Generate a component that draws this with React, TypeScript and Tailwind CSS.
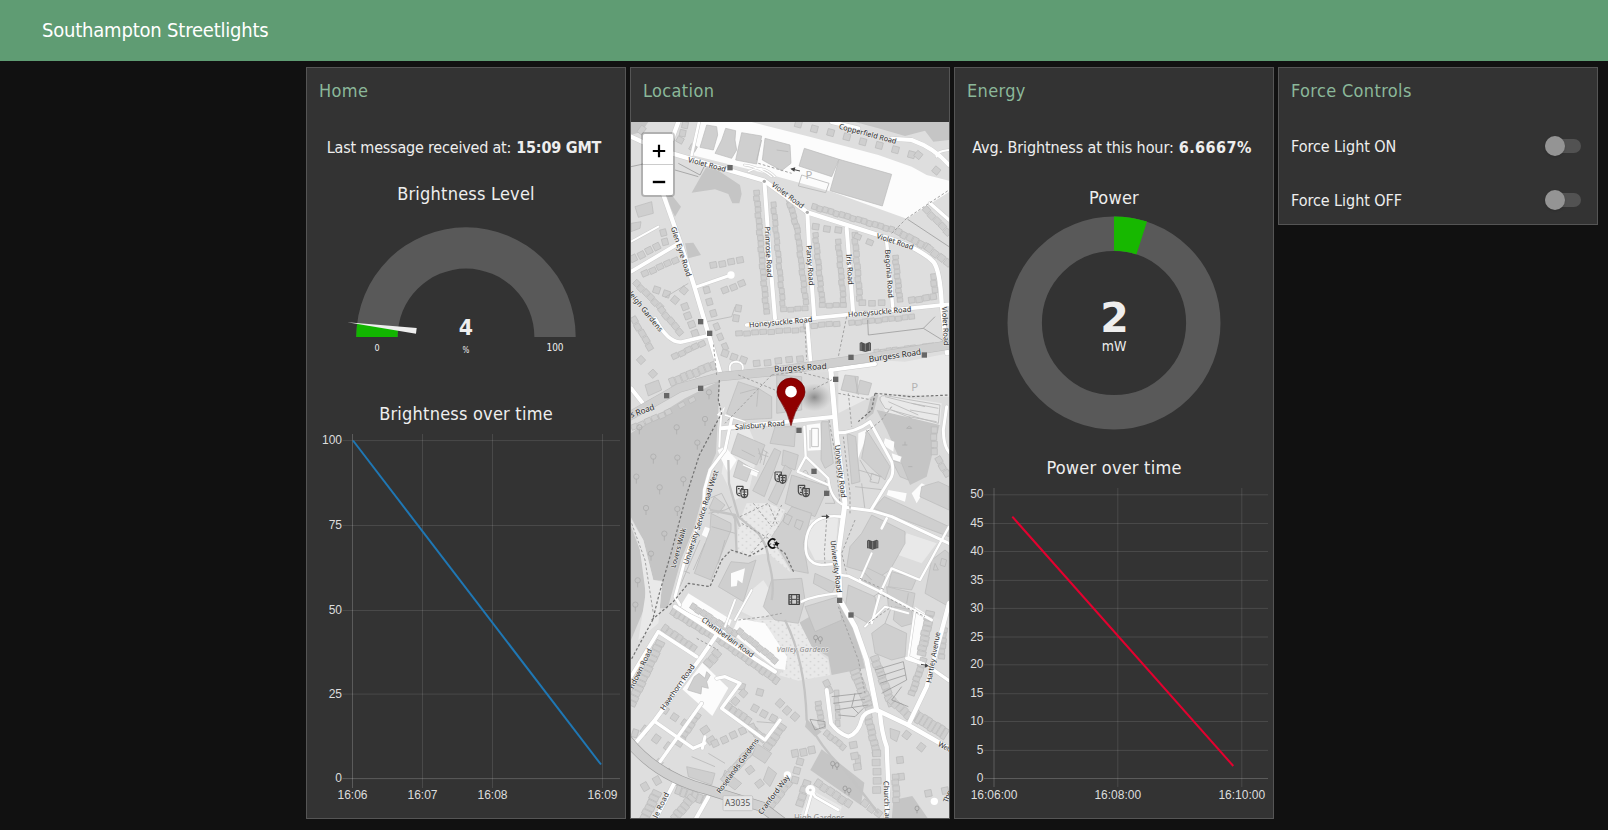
import type { ReactNode } from 'react';

const UI = 'font-["DejaVu_Sans_Condensed",Tahoma,"DejaVu_Sans",sans-serif]';

function Card({ title, className = '', children }: { title: string; className?: string; children: ReactNode }) {
  return (
    <section className={`flex w-80 flex-col border border-[#555] bg-[#333] ${className}`}>
      <h2 className="h-[54px] shrink-0 pt-[7px] pl-3 text-[18px] leading-[31px] tracking-[0.35px] text-[#8bb89a]">{title}</h2>
      {children}
    </section>
  );
}

function Message({ label, value, className }: { label: string; value: string; className: string }) {
  return (
    <p className={`flex h-[50px] items-center justify-center gap-[5px] pt-[2px] pr-1 text-[16px] whitespace-nowrap ${className}`}>
      <span>{label}</span>
      <b>{value}</b>
    </p>
  );
}

function ChartTitle({ children }: { children: string }) {
  return <h3 className="flex h-9 items-center justify-center pb-[2px] text-[18px] tracking-[0.22px]">{children}</h3>;
}

function Toggle({ label }: { label: string }) {
  return (
    <div className="flex h-[54px] shrink-0 items-center justify-between pr-4 pb-[6px] pl-3">
      <span className="pt-[2px] text-[16px] tracking-[-0.05px]">{label}</span>
      <button role="switch" aria-checked="false" aria-label={label} className="flex h-5 w-9 items-center">
        <span className="flex h-[14px] w-9 items-center rounded-full bg-[#525252]">
          <span className="size-5 shrink-0 rounded-full bg-[#949494] shadow" />
        </span>
      </button>
    </div>
  );
}

type Tick = [number, string];

function LineChart({
  box, xs, ys, left, right, top, bottom, labelY, color, line,
}: {
  box: string; xs: Tick[]; ys: Tick[]; left: number; right: number; top: number; bottom: number;
  labelY: number; color: string; line: [number, number, number, number];
}) {
  return (
    <svg viewBox={box} className="block w-full" fontSize="12" fill="#ddd">
      <g className='font-["Liberation_Sans",Arial,sans-serif]'>
        {ys.map(([y, t], i) => (
          <g key={t}>
            <line x1={left - 10} x2={right} y1={y} y2={y} stroke="#fff" strokeOpacity={i === ys.length - 1 ? 0.2 : 0.11} />
            <text x={left - 10.5} y={y + 3.6} textAnchor="end">{t}</text>
          </g>
        ))}
        {xs.map(([x, t], i) => (
          <g key={t}>
            <line x1={x} x2={x} y1={top} y2={bottom} stroke="#fff" strokeOpacity={i === 0 ? 0.2 : 0.11} />
            <text x={x} y={labelY} textAnchor="middle">{t}</text>
          </g>
        ))}
      </g>
      <line x1={line[0]} y1={line[1]} x2={line[2]} y2={line[3]} stroke={color} strokeWidth="2" />
    </svg>
  );
}

function BrightnessGauge() {
  return (
    <svg viewBox="307 216 318 180" className="block w-full" fill="#eee" textAnchor="middle">
      <path d="M356.3 337A109.7 109.7 0 0 1 575.7 337H534.4A68.4 68.4 0 0 0 397.6 337Z" fill="#595959" />
      <path d="M356.3 337A109.7 109.7 0 0 1 357.2 323.3L398.1 328.4A68.4 68.4 0 0 0 397.6 337Z" fill="#12b500" />
      <path d="M347.3 322.3L416.7 328L416 333.7Z" />
      <text x="466" y="335" fontSize="20.5" fontWeight="700" className='font-["DejaVu_Sans",sans-serif]'>4</text>
      <text x="466" y="353" fontSize="8">%</text>
      <text x="377" y="351" fontSize="9">0</text>
      <text x="555" y="351" fontSize="10">100</text>
    </svg>
  );
}

function PowerDonut() {
  return (
    <svg viewBox="955 216 318 234" className="block w-full" fill="#eee" textAnchor="middle">
      <circle cx="1114" cy="323" r="89.3" fill="none" stroke="#595959" strokeWidth="34.4" />
      <path d="M1114 216.4A106.6 106.6 0 0 1 1147 221.6L1136.4 254.4A72.2 72.2 0 0 0 1114 250.8Z" fill="#17b800" />
      <text x="1114.5" y="331.7" fontSize="41" fontWeight="700" className='font-["DejaVu_Sans",sans-serif]'>2</text>
      <text x="1114" y="351" fontSize="14">mW</text>
    </svg>
  );
}

/* ---- Map data, in thirds of a pixel ---- */

const woods = [
  '18,186 70,186 50,215 18,225',
  '250,312 345,375 350,402 343,430 322,430 310,402 270,388 200,398 230,345',
  '120,410 140,405 168,440 150,470',
  '690,186 972,186 972,240 925,245 900,212 840,228 760,205',
  '180,550 205,548 228,585 190,595',
  '18,1120 60,1090 180,1015 285,962 278,1080 273,1180 243,1250 233,1310 208,1400 168,1500 128,1645 104,1645 112,1562 85,1560 55,1440 18,1372',
  '18,1400 45,1470 60,1560 60,1640 18,1740',
  '755,1050 945,1090 905,1250 855,1275 825,1200 785,1110',
  '740,1000 760,1005 745,1060 720,1080',
  '590,2068 718,2168 708,2236 556,2130',
  '545,1978 590,2015 570,2030 540,2000',
  '805,2220 862,2208 912,2280 800,2280',
  '520,1690 640,1620 690,1700 720,1825 620,1845 610,1790 560,1760',
];

const pale = [
  '310,1115 370,1100 400,1170 370,1300 330,1320 290,1240',
  '365,1330 430,1330 480,1350 440,1440 500,1540 430,1480 370,1490 335,1470 340,1390',
  '555,1380 640,1365 630,1500 570,1500 545,1450',
  '845,1420 935,1450 890,1510 805,1480',
  '385,1680 520,1680 560,1760 610,1800 615,1845 520,1862 460,1845 487,1820 470,1760',
  '640,920 750,900 840,905 972,880 972,1010 860,1005 760,1000 640,1060',
  '760,1000 950,1030 945,1095 780,1055',
  '18,1380 55,1440 85,1560 112,1565 100,1690 40,1740 62,1600 45,1470',
  '560,2190 650,2240 640,2280 520,2280',
  '380,1590 415,1560 440,1600 440,1660 400,1680 340,1650',
];

const white = [
  '225,186 380,186 560,232 760,285 860,320 905,345 972,362 972,396 845,476 620,395 440,345 200,285',
  '340,1675 420,1690 486,1790 480,1830 450,1825 320,1720',
  '232,1808 310,1884 262,1968 172,1888',
  '860,1300 890,1270 930,1290 920,1310 890,1305 875,1330',
  '190,1600 320,1680 300,1730 165,1640',
  '870,1640 900,1660 890,1800 845,1790',
  '278,1170 300,1160 335,1200 310,1240 290,1200',
  '545,1095 585,1090 590,1170 548,1172',
  '318,1540 360,1525 352,1570 318,1580',
  '275,1065 300,1040 290,1070',
  '240,1400 270,1410 260,1440 230,1425',
  '780,1135 808,1145 805,1175 775,1155',
  '800,1180 830,1190 825,1205 805,1200',
  '790,1290 845,1300 840,1325 785,1305',
  '700,1120 735,1105 705,1180 698,1200',
  '360,1215 400,1235 395,1250 358,1235',
];

const buildings = [
  '245,195 275,200 278,225 265,270 225,262',
  '302,205 332,212 330,240 335,270 320,295 270,280 290,240',
  '350,218 410,228 395,312 332,300',
  '420,235 495,255 498,310 470,332 412,300',
  '538,265 642,298 620,350 522,318',
  '642,298 800,343 772,438 615,392',
  '30,440 80,425 85,460 40,472',
  '18,490 48,485 45,505 18,515',
  '60,975 100,960 110,990 70,1008',
  '340,965 400,985 440,1010 440,1075 345,1080 305,1060',
  '455,945 530,950 530,1050 455,1060',
  '660,945 700,950 695,1000 648,990',
  '705,960 740,970 730,1005 695,1000',
  '338,1120 420,1155 395,1215 318,1180',
  '450,1100 512,1100 508,1160 435,1150',
  '448,1165 468,1175 418,1310 383,1292',
  '475,1170 520,1185 510,1230 470,1215',
  '480,1215 500,1230 455,1335 430,1320',
  '500,1245 610,1280 570,1370 480,1330',
  '340,1200 380,1225 365,1265 325,1250',
  '268,1310 300,1335 280,1360 252,1345',
  '500,1340 560,1360 535,1450 550,1540 500,1530 440,1430',
  '590,1085 610,1085 625,1210 600,1225 588,1200',
  '666,1120 692,1130 705,1265 680,1272',
  '725,1110 795,1220 780,1260 745,1230 710,1195',
  '800,1200 830,1210 850,1260 825,1250',
  '778,1310 972,1400 972,1430 745,1345',
  '890,1280 940,1265 972,1280 972,1350 885,1310',
  '740,1365 840,1415 840,1450 795,1530 765,1550 665,1520 675,1460 710,1420',
  '258,1360 318,1390 318,1410 258,1560 208,1540 255,1410',
  '318,1505 370,1510 393,1500 355,1625 280,1580',
  '440,1560 530,1555 540,1620 520,1690 450,1680 415,1640',
  '570,1540 635,1570 620,1600 565,1570',
  '670,1575 750,1610 755,1650 730,1690 660,1650',
  '540,1640 640,1610 650,1680 570,1715',
  '800,1535 875,1555 860,1590 790,1580',
  '720,1520 780,1550 770,1590 710,1560',
  '785,1580 870,1600 860,1660 790,1640',
  '920,1500 960,1470 972,1480 972,1640 900,1600',
  '810,1640 860,1650 865,1690 830,1700 805,1680',
  '740,1720 780,1690 845,1720 840,1790 800,1800 750,1780',
  '208,1850 222,1840 240,1855 245,1835 256,1845 245,1865 250,1885 230,1880 228,1902 188,1890',
  '395,2050 440,2080 420,2110 382,2085',
  '185,2120 270,2140 260,2175 190,2150',
  '300,2130 350,2170 330,2190 290,2160',
  '430,2120 455,2140 435,2180 415,2160',
  '795,2005 825,2015 815,2045 797,2035',
  '690,2085 705,2085 708,2120 692,2122',
];

/* x1, y1, x2, y2, count, depth: terraces running between two points */
type Terrace = [number, number, number, number, number, number];
const terraces: Terrace[] = [
  [520, 192, 860, 282, 8, 20], [880, 285, 935, 330, 2, 20],
  [395, 398, 425, 755, 22, 17], [446, 434, 474, 730, 17, 15], [492, 418, 515, 500, 6, 17], [518, 512, 543, 726, 13, 16],
  [568, 440, 800, 508, 15, 17], [572, 525, 592, 720, 13, 16], [640, 545, 656, 720, 11, 16], [690, 525, 705, 715, 11, 17],
  [812, 592, 825, 720, 10, 17], [820, 515, 905, 560, 6, 20], [912, 565, 968, 608, 4, 20], [905, 450, 968, 515, 5, 18],
  [926, 650, 930, 690, 3, 17], [476, 748, 540, 745, 4, 14], [592, 735, 655, 735, 4, 14],
  [572, 500, 640, 510, 3, 18], [698, 530, 735, 545, 2, 16], [712, 728, 770, 728, 3, 17], [860, 720, 925, 710, 4, 18],
  [342, 820, 535, 808, 9, 15], [545, 798, 635, 790, 5, 15], [680, 788, 860, 770, 10, 15],
  [395, 910, 525, 895, 5, 18], [755, 875, 955, 852, 12, 14], [142, 965, 265, 915, 8, 24], [150, 888, 230, 850, 5, 16],
  [35, 670, 105, 740, 6, 18], [110, 750, 165, 815, 5, 18], [28, 780, 75, 860, 5, 18], [25, 595, 95, 560, 4, 20], [115, 518, 122, 545, 2, 18],
  [60, 640, 150, 600, 5, 17], [95, 690, 125, 700, 2, 20], [150, 720, 175, 690, 2, 20], [180, 740, 210, 820, 4, 20],
  [245, 690, 265, 760, 3, 18], [275, 800, 300, 860, 3, 16], [265, 615, 345, 600, 4, 18], [300, 690, 350, 670, 3, 18],
  [340, 745, 335, 775, 2, 18], [300, 880, 355, 900, 3, 20], [48, 900, 85, 940, 2, 20], [28, 1100, 130, 1056, 6, 16],
  [170, 1035, 200, 1018, 2, 14], [165, 240, 205, 262, 2, 18], [180, 195, 175, 220, 2, 18], [50, 210, 70, 225, 1, 24],
  [145, 1655, 260, 1725, 10, 22], [120, 1705, 205, 1765, 7, 22], [280, 1735, 455, 1860, 14, 22],
  [205, 1640, 330, 1720, 9, 18], [345, 1715, 450, 1800, 8, 18], [105, 1750, 20, 1930, 13, 26],
  [350, 1880, 405, 1895, 2, 20], [355, 1900, 310, 1950, 3, 20], [310, 1940, 370, 1980, 5, 22], [250, 1810, 275, 1780, 3, 26],
  [390, 1945, 445, 1975, 3, 20], [465, 1930, 510, 1970, 3, 22], [470, 2000, 430, 2060, 5, 26], [385, 2010, 415, 2035, 3, 24],
  [215, 1965, 160, 2050, 7, 24], [120, 1950, 180, 1990, 3, 20], [240, 2010, 260, 2040, 2, 24], [60, 2010, 130, 2060, 3, 24],
  [30, 2020, 60, 2030, 1, 24], [100, 2110, 165, 2170, 3, 24], [270, 2050, 380, 2000, 5, 20], [370, 2080, 300, 2160, 7, 24],
  [60, 2180, 130, 2140, 3, 24], [95, 2200, 60, 2274, 6, 28], [160, 2190, 240, 2220, 6, 26], [200, 2215, 150, 2274, 6, 26],
  [375, 2130, 405, 2170, 2, 22], [490, 2170, 430, 2250, 6, 22], [510, 2080, 560, 2070, 3, 22], [525, 2105, 510, 2160, 3, 20],
  [580, 1930, 592, 2000, 6, 18], [605, 1870, 615, 1890, 2, 18], [635, 1900, 640, 1990, 5, 14], [605, 2020, 655, 2060, 5, 18],
  [690, 1835, 735, 1945, 9, 28], [750, 1795, 800, 1930, 9, 24], [800, 1920, 850, 1965, 5, 24], [870, 1965, 960, 2020, 8, 34],
  [730, 1970, 755, 2080, 8, 22], [755, 2080, 757, 2190, 5, 24], [685, 2055, 697, 2120, 3, 22], [845, 2025, 890, 2060, 2, 22],
  [915, 1660, 890, 1780, 9, 26], [958, 1710, 950, 1790, 6, 18], [895, 1800, 862, 1900, 8, 20], [825, 2100, 830, 2150, 2, 20],
  [812, 2150, 815, 2220, 5, 20], [910, 2200, 960, 2190, 2, 20], [545, 2170, 525, 2230, 4, 22], [580, 2170, 670, 2230, 6, 22], [720, 2230, 760, 2260, 3, 20],
  [928, 1110, 928, 1175, 4, 18], [942, 1200, 965, 1240, 3, 18],
];

const roads: [string, number][] = [
  ['M18 230L100 268L418 362L547 457L760 525Q880 560 925 605Q945 630 950 730L966 880', 13],
  ['M160 186L140 240M110 390L165 545L205 670L285 937', 13],
  ['M222 186L200 285', 8],
  ['M18 635L165 548', 11], ['M210 682L318 645', 9], ['M90 775Q130 850 170 846L245 828', 11], ['M18 985L60 1038', 12],
  ['M418 362L432 560L450 775', 12], ['M547 457L552 560L568 775', 12], ['M665 505L685 765', 12], ['M785 545L803 740', 10],
  ['M365 795L972 733', 11], ['M547 790L557 910', 11], ['M18 545L100 500', 6], ['M315 932Q310 905 335 905Q360 910 352 932', 5],
  ['M620 186L700 205M800 236L860 240Q930 265 972 315', 12], ['M972 270Q930 275 935 290', 6], ['M915 430L972 480', 10],
  ['M358 315Q400 320 440 350M370 335Q410 310 450 350', 4],
  ['M618 935L635 1130L660 1330L640 1480L645 1620L690 1700L725 1800L755 1950', 15],
  ['M615 930L750 912', 12], ['M290 1105L630 1070', 12], ['M320 1075L300 1170L255 1230L238 1290L235 1350L180 1500L150 1610L165 1635', 9],
  ['M290 1050L285 1110L283 1160', 6], ['M538 1100L542 1190L518 1235L610 1275M542 1190L610 1255Q615 1315 655 1335', 7],
  ['M640 1118Q690 1118 735 1085L800 1205Q810 1245 790 1265L738 1350', 9],
  ['M660 1342L740 1352L800 1370L972 1450', 9], ['M648 1370Q560 1360 545 1430Q530 1510 590 1515L630 1512', 8],
  ['M645 1545L670 1548L770 1597L920 1680', 8], ['M972 1400L885 1560L800 1525L765 1600L740 1690', 7], ['M530 1625Q570 1605 640 1600', 7],
  ['M740 1480L705 1560M870 1650L850 1790L905 1815', 6], ['M785 1375L770 1405', 8],
  ['M755 1950L850 1995L972 2065', 14], ['M755 1950Q715 1955 710 1980Q700 2020 670 2030Q640 2020 618 1990L605 1890', 12],
  ['M765 1960Q770 2020 785 2060L790 2180L783 2280', 13], ['M850 1995L905 1880L972 1630', 13], ['M845 1795L905 1815L972 1862', 10],
  ['M35 2045L90 1980L230 1790L285 1710', 12], ['M18 1850L100 1715L215 1790', 11], ['M150 1640L450 1835', 12],
  ['M90 1985L205 2065L240 2050M230 1930L105 2105', 10], ['M275 1855L300 1850L345 1870L290 1945L420 2040L465 1980', 10],
  ['M150 2165L85 2290M250 2210L205 2290', 12], ['M560 2190L570 2210L640 2250M560 2200L540 2270', 8],
  ['M965 1040L955 1110Q955 1160 975 1180', 9], ['M720 1700L780 1640L850 1660', 6],
  ['M165 1650L270 1700M330 1620L300 1700M380 1590L330 1680', 6], ['M240 2030L232 2065', 9],
  ['M355 1215L400 1235M300 1065L360 1085', 4],
];

const dashed = [
  'M283 960L280 1020L290 1060L268 1100L223 1185L183 1310L138 1480L103 1600L83 1680L18 1800',
  'M80 1680L145 1625L190 1570L255 1580L290 1500L318 1470L375 1488L440 1450L480 1480L508 1540',
  'M750 1000L860 1010L972 1005M750 1000L740 1050L700 1085',
];

const faintDashed = [
  'M345 1370L430 1330L460 1400', 'M385 1330L440 1400L470 1335', 'M350 1390L440 1440M370 1490L430 1420',
  'M612 1080L630 1180L645 1330', 'M675 1360L675 1300L655 1130', 'M690 1380L650 1480L665 1540', 'M605 1380L598 1480L600 1510',
  'M845 475L800 520M845 475L972 390', 'M665 770L640 890', 'M540 800L545 900', 'M400 310L500 340', 'M275 945L265 850',
  'M440 945L300 1090M440 945L520 935L620 960L560 990M340 945L450 990', 'M640 1000L740 1020M670 1000L680 1100',
  'M640 1640L700 1800L720 1900', 'M215 1735L280 1770', 'M340 1680L420 1670L470 1660',
  'M705 1555L780 1590M760 1600L900 1670M730 1690L800 1640', 'M20 1390L60 1500L85 1660', 'M800 1040L770 1080L720 1120',
];

const fences = [
  'M848 478L972 560', 'M728 780L730 825L895 805L930 770M895 805L960 845',
  'M620 1910L710 1900M625 1930L720 1918M630 1950L730 1935M640 1965L690 1970L715 1945M690 1900L680 1940L700 1960',
  'M750 1830L835 1805L845 1860L770 1900M760 1850L838 1825M765 1870L842 1845M830 1880L800 1920L850 1940',
  'M555 1978L600 1985L600 2000L570 2010Z', 'M150 285L240 315L225 345L160 310', 'M18 320L110 300M150 330L220 350',
];

const thinLines = [
  'M345 1000L400 985L395 1040M700 1005L690 950M350 1170L390 1190M415 1170L430 1180M480 1360L502 1370L490 1395L475 1385ZM515 1378L535 1385L525 1410L508 1400Z',
  'M455 270L490 275M410 240L395 300M530 345L612 370L602 398L520 378Z',
  'M780 1010L900 1040M790 1025L880 1065M800 1050L860 1075M860 1030L940 1045M855 1050L940 1065M850 1070L935 1085M765 1020Q760 1000 800 1010L945 1035L940 1090L780 1045Z',
  'M560 1105H580V1160H560ZM555 1110V1165', 'M740 1240L765 1250L760 1270L735 1265ZM705 1200L740 1260M700 1230L770 1250M690 1280L780 1290M710 1270L720 1350',
  'M210 1430L180 1500M225 1440L190 1520M240 1450L205 1530M190 1520L165 1580M170 1530L195 1540', 'M400 1165L410 1200M415 1165L405 1210M425 1175L415 1215M400 1180L430 1190',
  'M240 1320L290 1300L330 1380M250 1360L300 1350L320 1340M260 1400L330 1420M300 1440L280 1510',
  'M600 1260L630 1330L600 1330M560 1250L590 1265M530 1240Q545 1220 550 1245Q545 1260 530 1240',
  'M745 1610L760 1600M800 1640L780 1690M395 1985L460 1990M200 2090L270 2120M250 2080L300 2110M120 712L190 670M245 785L320 770L330 740',
  'M710 1530L740 1560M850 1600L845 1630M930 1510L940 1530L925 1530ZM950 1495L965 1500L960 1520L945 1515Z',
];

const paths = [
  'M310 1200L312 1270L340 1370L400 1420Q430 1460 430 1500Q450 1570 440 1620',
  'M480 1680Q540 1800 545 1980Q600 2080 660 2130L760 2260',
  'M255 1350L330 1365L335 1480', 'M330 1365L345 1400',
];

/* centre x, centre y, angle, text, length, size */
type Label = [number, number, number, string, number, number];
const labels: Label[] = [
  [728, 222, 15, 'Copperfield Road', 178, 22], [246, 314, 15, 'Violet Road', 117, 22], [488, 406, 37, 'Violet Road', 115, 22],
  [810, 545, 18, 'Violet Road', 115, 22], [168, 575, 72, 'Glen Eyre Road', 155, 22], [430, 576, 87, 'Primrose Road', 152, 22],
  [555, 616, 86, 'Pansy Road', 120, 22], [674, 628, 86, 'Iris Road', 92, 22], [792, 641, 86, 'Begonia Road', 145, 22],
  [467, 787, -5, 'Honeysuckle Road', 190, 22], [764, 756, -5, 'Honeysuckle Road', 190, 22], [961, 798, 87, 'Violet Road', 117, 22],
  [526, 924, -3, 'Burgess Road', 158, 25], [810, 888, -8, 'Burgess Road', 158, 25], [52, 1054, -20, 's Road', 76, 25],
  [62, 755, 51, 'leigh Gardens', 148, 22], [405, 1096, -5, 'Salisbury Road', 150, 22],
  [646, 1234, 83, 'University Road', 160, 22], [633, 1520, 83, 'University Road', 158, 22],
  [228, 1372, -72, 'University Service Road West', 296, 22], [160, 1464, -75, 'Lovers Walk', 122, 21],
  [308, 1732, 36, 'Chamberlain Road', 188, 22], [47, 1826, -64, 'ndown Road', 130, 22], [158, 1882, -55, 'Hawthorn Road', 162, 22],
  [925, 1792, -80, 'Hartley Avenue', 155, 22], [338, 2118, -54, 'Roselands Gardens', 198, 22], [447, 2204, -53, 'Cranford Way', 142, 22],
  [785, 2230, 88, 'Church Lane', 134, 22], [962, 2062, 27, 'Welb', 48, 22], [105, 2242, -64, 'ble Road', 96, 22], [968, 2210, -70, 'The', 36, 22],
];

const signals = [
  [315, 323], [227, 785], [254, 820], [227, 985], [125, 1007], [678, 892], [898, 885], [632, 958], [522, 1111],
  [567, 1234], [605, 1300], [644, 1621], [678, 1665],
];

const trees = [
  [252, 1003], [240, 1083], [155, 1108], [217, 1154], [85, 1196], [157, 1199], [34, 1256], [175, 1264], [104, 1288],
  [63, 1350], [157, 1353], [118, 1427], [78, 1487], [38, 1567], [31, 1640], [43, 1108],
];
const smallTrees = [[572, 1738], [586, 1742], [623, 2116], [636, 2120], [660, 2190], [672, 2196], [876, 2250]];

function Masks({ x, y }: { x: number; y: number }) {
  return (
    <g transform={`translate(${x} ${y})`} fill="none" stroke="#484848" strokeWidth="3.6">
      <path d="M-17 -16H2V-4M-17 -16V3Q-15 13 -5 13M-13 -9H-8M-4 -9H0M-12 5H-6M-6 -6V0" />
      <path d="M-4 -6H16V8Q14 18 6 18Q-3 17 -4 8ZM0 1H5M8 1H13M1 9H12M6 -5V16" />
    </g>
  );
}

function Book({ x, y }: { x: number; y: number }) {
  return (
    <g transform={`translate(${x} ${y})`}>
      <path d="M-17 -13L-12 -16L0 -11L12 -16L17 -13V10L13 10L0 14L-13 10H-17Z" fill="#505050" />
      <path d="M0 -10V12M-13 -12V8M13 -12V8" stroke="#999" strokeWidth="2" />
    </g>
  );
}

function StreetMap() {
  return (
    <svg viewBox="18 186 954 2088" className="block h-[696px] w-[318px] bg-[#dedede]" strokeLinejoin="round">
      <defs>
        <pattern id="scrub" width="24" height="20" patternUnits="userSpaceOnUse">
          <path d="M2 5h5M14 15h5" stroke="#c4c4c4" strokeWidth="2.5" />
        </pattern>
        <radialGradient id="shade">
          <stop offset="0" stopColor="#707070" stopOpacity=".75" />
          <stop offset="1" stopColor="#999" stopOpacity="0" />
        </radialGradient>
      </defs>
      <path d="M285 960L620 935L972 1000V1690L780 1610L690 1700L520 1690L160 1640L240 1330Z" fill="#dcdcdc" />
      <g fill="#c5c5c5">{woods.map((p) => <polygon key={p} points={p} />)}</g>
      <g fill="#e9e9e9">{pale.map((p) => <polygon key={p} points={p} />)}</g>
      <polygon points={pale[4]} fill="url(#scrub)" />
      <polygon points={pale[1]} fill="url(#scrub)" />
      <g fill="#fcfcfc">{white.map((p) => <polygon key={p} points={p} />)}</g>
      <g fill="#cfcfcf" stroke="#bababa" strokeWidth="2">
        {buildings.map((p) => <polygon key={p} points={p} />)}
        {terraces.map(([x1, y1, x2, y2, n, d], i) => {
          const len = Math.hypot(x2 - x1, y2 - y1);
          const angle = (Math.atan2(y2 - y1, x2 - x1) * 180) / Math.PI;
          const step = n > 1 ? len / (n - 1) : 20;
          const w = Math.min(step * 0.86, 20);
          return (
            <g key={i} transform={`translate(${x1} ${y1}) rotate(${angle})`}>
              {Array.from({ length: n }, (_, k) => (
                <rect key={k} x={k * step - w / 2} y={-d / 2 + (k % 3 === 1 ? 2 : 0)} width={w} height={d} />
              ))}
            </g>
          );
        })}
      </g>
      <polygon points="318,1540 360,1525 352,1570 338,1560 335,1578 318,1580" fill="#fcfcfc" />
      <g fill="none" stroke="#b9b9b9" strokeWidth="2.5">{thinLines.map((d) => <path key={d} d={d} />)}</g>
      <g fill="none" stroke="#c4c4c4" strokeWidth="7">{paths.map((d) => <path key={d} d={d} />)}</g>
      <g fill="none" stroke="#8e8e8e" strokeWidth="2">{fences.map((d) => <path key={d} d={d} />)}</g>
      <g fill="none" strokeLinecap="round">
        {roads.map(([d, w]) => <path key={d} d={d} stroke="#cdcdcd" strokeWidth={w + 3} />)}
        {roads.map(([d, w]) => <path key={d} d={d} stroke="#fff" strokeWidth={w} />)}
        <path d="M0 1076L160 985L285 950L440 935L720 895L990 852" stroke="#bdbdbd" strokeWidth="28" />
        <path d="M0 1076L160 985L285 950L440 935L720 895L990 852" stroke="#cfcfcf" strokeWidth="25" />
        <path d="M0 2030Q90 2150 250 2190L410 2240L490 2300" stroke="#a0a0a0" strokeWidth="31" />
        <path d="M0 2030Q90 2150 250 2190L410 2240L490 2300" stroke="#d0d0d0" strokeWidth="27" />
      </g>
      <g fill="#fff">
        <circle cx="318" cy="645" r="11" /><circle cx="487" cy="2145" r="11" /><circle cx="556" cy="2190" r="15" /><circle cx="928" cy="2224" r="11" />
      </g>
      <circle cx="556" cy="2190" r="4" fill="#ccc" />
      <g fill="none" stroke="#a2a2a2" strokeWidth="3" strokeDasharray="8 6">{faintDashed.map((d) => <path key={d} d={d} />)}</g>
      <g fill="none" stroke="#727272" strokeWidth="3.6" strokeDasharray="8 6">{dashed.map((d) => <path key={d} d={d} />)}</g>
      <g fill="none" stroke="#adadad" strokeWidth="2.5">
        {trees.map(([x, y]) => <path key={`${x}-${y}`} d={`M${x} ${y + 15}V${y}M${x - 8} ${y - 6}a8 8 0 1 1 16 0a8 8 0 1 1 -16 0`} />)}
        {smallTrees.map(([x, y]) => <path key={`${x}-${y}`} d={`M${x} ${y + 10}V${y}M${x - 6} ${y - 5}a6 7 0 1 1 12 0a6 7 0 1 1 -12 0`} stroke="#999" />)}
        <path d="M832 1155H847M840 1155V1145M850 1220H862M845 1105H860L853 1098Z" />
      </g>
      <g fill="#666">{signals.map(([x, y]) => <rect key={`${x}-${y}`} x={x - 8} y={y - 8} width="16" height="16" />)}</g>
      <g fill="#aaa"><circle cx="418" cy="364" r="5" /><circle cx="547" cy="457" r="5" /></g>
      <path d="M525 333L500 327M590 1369H606M888 1813L904 1816" fill="none" stroke="#444" strokeWidth="3" />
      <path d="M496 326L511 322L508 335ZM614 1370L603 1363V1377ZM912 1818L901 1810L899 1823Z" fill="#444" />
      <g fill="#b4b4b4" textAnchor="middle" fontSize="34" className='font-["Noto_Sans",sans-serif]'>
        <text x="552" y="358">P</text><text x="869" y="994">P</text>
      </g>
      <Book x={721} y={862} /><Book x={743} y={1455} />
      <Masks x={467} y={1252} /><Masks x={352} y={1295} /><Masks x={537} y={1292} />
      <path d="M451 1440A13 13 0 1 0 451 1461" fill="none" stroke="#111" strokeWidth="5" />
      <path d="M455 1443L458 1448L464 1450L459 1454L458 1460L453 1456L447 1456L450 1451L448 1446L453 1447Z" fill="#111" />
      <g fill="none" stroke="#444" strokeWidth="4">
        <rect x="492" y="1604" width="31" height="29" /><path d="M500 1604V1633M515 1604V1633M500 1618H515M493 1611H499M493 1618H499M493 1626H499M516 1611H522M516 1618H522M516 1626H522" strokeWidth="3" />
      </g>
      <g textAnchor="middle" className='font-["Noto_Sans",sans-serif]' fill="#2b2b2b" stroke="#f0f0f0" strokeWidth="4" strokeOpacity=".65" paintOrder="stroke">
        {labels.map(([x, y, a, t, len, size], i) => (
          <text key={i} transform={`translate(${x} ${y}) rotate(${a})`} y="7" fontSize={size} textLength={len}>{t}</text>
        ))}
        <text x="533" y="1775" fontSize="22" fontStyle="italic" fill="#888" textLength="156">Valley Gardens</text>
        <text x="583" y="2284" fontSize="24" fill="#888" textLength="152">High Gardens</text>
      </g>
      <rect x="294" y="2207" width="89" height="45" rx="4" fill="#e6e6e6" stroke="#bbb" strokeWidth="2" />
      <text x="338" y="2239" fontSize="25" textAnchor="middle" fill="#505050" textLength="76" className='font-["Noto_Sans",sans-serif]'>A3035</text>
      <ellipse cx="568" cy="1012" rx="52" ry="42" fill="url(#shade)" />
      <path d="M498 1097Q488 1055 467 1024Q456 1009 456 996A42 42 0 0 1 540 996Q540 1009 529 1024Q508 1055 498 1097Z" fill="#8f0000" stroke="#6c0000" strokeWidth="2" />
      <circle cx="498" cy="995" r="17.5" fill="#fff" />
    </svg>
  );
}

function ZoomControl() {
  return (
    <div className="absolute top-[10px] left-[10px] flex flex-col rounded-[4px] border-2 border-black/20 bg-clip-padding">
      <button aria-label="Zoom in" className="flex h-[31px] w-[30px] items-center justify-center rounded-t-[2px] border-b border-[#ccc] bg-white pt-[3px] pl-px">
        <svg viewBox="0 0 14 14" className="size-[14px]"><path d="M.8 7H13.2M7 .8V13.2" stroke="#000" strokeWidth="2.2" /></svg>
      </button>
      <button aria-label="Zoom out" className="flex size-[30px] items-center justify-center rounded-b-[2px] bg-white pt-[3px] pl-px">
        <svg viewBox="0 0 14 14" className="size-[14px]"><path d="M.8 7H13.2" stroke="#000" strokeWidth="2.4" /></svg>
      </button>
    </div>
  );
}

export default function App() {
  return (
    <div className={`h-[830px] w-[1608px] overflow-hidden bg-[#111] text-[#eee] ${UI}`}>
      <header className="flex h-[61px] items-center bg-[#5f9c73] pb-[2px] pl-[42px]">
        <h1 className="text-[20px] tracking-[-0.2px] text-white">Southampton Streetlights</h1>
      </header>
      <main className="flex items-start gap-1 pt-[6px] pl-[306px]">
        <Card title="Home" className="h-[752px]">
          <Message label="Last message received at:" value="15:09 GMT" className="tracking-[-0.2px]" />
          <div className="h-1" />
          <ChartTitle>Brightness Level</ChartTitle>
          <div className="h-1" />
          <BrightnessGauge />
          <ChartTitle>Brightness over time</ChartTitle>
          <LineChart
            box="307 432 318 386" left={352.5} right={620} top={434} bottom={788} labelY={799} color="#1f77b4"
            line={[353, 440.5, 601, 764.5]}
            xs={[[352.5, '16:06'], [422.5, '16:07'], [492.5, '16:08'], [602.5, '16:09']]}
            ys={[[440.6, '100'], [525.5, '75'], [610.5, '50'], [694.1, '25'], [778.6, '0']]}
          />
        </Card>
        <Card title="Location" className="h-[752px]">
          <div className="relative">
            <StreetMap />
            <ZoomControl />
          </div>
        </Card>
        <Card title="Energy" className="h-[752px]">
          <Message label="Avg. Brightness at this hour:" value="6.6667%" className="tracking-[-0.1px] [&>b]:tracking-[0.45px]" />
          <div className="h-2" />
          <ChartTitle>Power</ChartTitle>
          <PowerDonut />
          <ChartTitle>Power over time</ChartTitle>
          <LineChart
            box="955 486 318 332" left={994} right={1268} top={488} bottom={787} labelY={799} color="#e4002f"
            line={[1012.3, 516.7, 1233.3, 766]}
            xs={[[994, '16:06:00'], [1117.8, '16:08:00'], [1241.8, '16:10:00']]}
            ys={[[494.8, '50'], [523.5, '45'], [551.5, '40'], [580.4, '35'], [608.4, '30'], [637, '25'], [664.8, '20'], [693.7, '15'], [721.5, '10'], [750.4, '5'], [778.5, '0']]}
          />
        </Card>
        <Card title="Force Controls" className="h-[158px]">
          <Toggle label="Force Light ON" />
          <Toggle label="Force Light OFF" />
        </Card>
      </main>
    </div>
  );
}
